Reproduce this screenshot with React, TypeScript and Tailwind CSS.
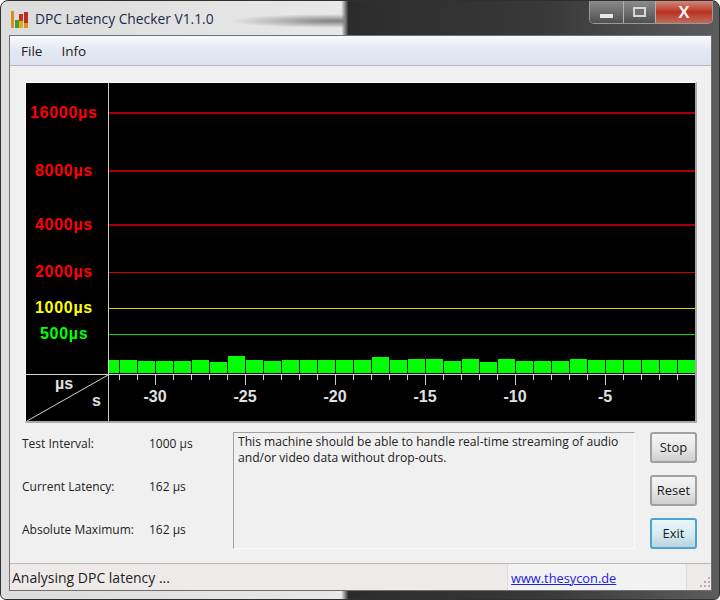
import React from 'react';

const barTops = [360, 360, 361, 361, 361, 360, 362, 356, 360, 361, 360, 360, 360, 360, 360, 357, 360, 359, 359, 361, 359, 362, 359, 361, 361, 361, 359, 360, 360, 360, 360, 360, 360];
const gridLines = [
  { y: 112, h: 2, color: '#a80000', label: '16000µs', labelX: 30, labelY: 118, labelColor: '#ff0000' },
  { y: 170, h: 2, color: '#a80000', label: '8000µs', labelX: 35, labelY: 176, labelColor: '#ff0000' },
  { y: 224, h: 2, color: '#a80000', label: '4000µs', labelX: 35, labelY: 230, labelColor: '#ff0000' },
  { y: 272, h: 1, color: '#d00000', label: '2000µs', labelX: 35, labelY: 277, labelColor: '#ff0000' },
  { y: 308, h: 1, color: '#d8d800', label: '1000µs', labelX: 35, labelY: 313, labelColor: '#ffff00' },
  { y: 334, h: 1, color: '#00d800', label: '500µs', labelX: 40, labelY: 339, labelColor: '#00ff00' },
];
const seconds = [-30, -25, -20, -15, -10, -5];

// the graph is drawn in window coordinates, offset by the black area's corner
const LatencyChart = () => (
  <svg width="669" height="338" viewBox="26 83 669 338" className="block font-['Liberation_Sans',sans-serif]">
    <rect x="26" y="83" width="669" height="338" fill="#000000" />
    {gridLines.map((line) => (
      <g key={line.y}>
        <rect x="109" y={line.y} width="586" height={line.h} fill={line.color} />
        <text x={line.labelX} y={line.labelY} fill={line.labelColor} fontSize="16" fontWeight="700" letterSpacing="0.7">
          {line.label}
        </text>
      </g>
    ))}
    {barTops.map((top, i) => {
      const x = i === 0 ? 109 : 102 + i * 18;
      const w = i === 0 ? 10 : 17;
      return <rect key={i} x={x} y={top} width={w} height={373 - top} fill="#00ff00" />;
    })}
    <rect x="108" y="83" width="1" height="338" fill="#d0d0d0" />
    <rect x="26" y="374" width="669" height="1" fill="#d0d0d0" />
    {barTops.slice(0, 32).map((_, i) => {
      const x = 119 + i * 18;
      const major = (x - 155) % 90 === 0;
      return <rect key={i} x={x} y="375" width="1" height={major ? 10 : 5} fill="#d0d0d0" />;
    })}
    {seconds.map((s, i) => (
      <text key={s} x={155 + i * 90} y="402" fill="#e0e0e0" fontSize="16" fontWeight="700" textAnchor="middle">
        {s}
      </text>
    ))}
    <line x1="108" y1="375" x2="27" y2="421" stroke="#d0d0d0" strokeWidth="1" />
    <text x="55" y="389" fill="#e0e0e0" fontSize="16" fontWeight="700">µs</text>
    <text x="92" y="406" fill="#e0e0e0" fontSize="16" fontWeight="700">s</text>
  </svg>
);

const AppIcon = () => (
  <svg width="17" height="17" viewBox="0 0 17 17" className="shrink-0">
    <rect x="0" y="0" width="3" height="17" fill="#e08a20" />
    <rect x="4" y="9" width="4" height="8" fill="#3f9f2a" />
    <rect x="8" y="3" width="4" height="14" fill="#c8301c" />
    <rect x="8" y="10" width="4" height="7" fill="#d8b020" />
    <rect x="13" y="1" width="4" height="16" fill="#b8301c" />
    <rect x="13" y="12" width="4" height="5" fill="#e0901c" />
  </svg>
);

const StatusGrip = () => (
  <svg width="11" height="11" viewBox="0 0 11 11" className="mt-auto mb-[2px] ml-auto">
    {[[8, 0], [4, 4], [8, 4], [0, 8], [4, 8], [8, 8]].map(([x, y]) => (
      <rect key={`${x}-${y}`} x={x} y={y} width="2" height="2" fill="#b4b0b0" />
    ))}
  </svg>
);

const ReadoutRow = ({ label, value }: { label: string; value: string }) => (
  <div className="flex h-[20px] items-center">
    <span className="w-[127px]">{label}</span>
    <span>{value}</span>
  </div>
);

const WinButton = ({ label, focused }: { label: string; focused?: boolean }) => (
  <button
    className={
      focused
        ? 'h-[31px] w-[47px] rounded-[3px] border-2 border-[#4aa3d0] bg-gradient-to-b from-[#eaf6fb] via-[#d8ebf3] to-[#b8d4e0] text-[13px] text-[#1a1a1a]'
        : 'h-[31px] w-[47px] rounded-[3px] border-2 border-[#a0a0a0] bg-gradient-to-b from-[#f4f4f4] via-[#e8e8e8] to-[#cfcfcf] text-[13px] text-[#1a1a1a]'
    }
  >
    {label}
  </button>
);

export default function App() {
  return (
    <div className="h-[600px] w-[720px] overflow-hidden bg-white font-['Open_Sans',sans-serif] text-[12px] text-[#222222]">
      <div className="flex h-[600px] flex-col rounded-t-[8px] rounded-b-[6px] border border-[#303030] bg-[linear-gradient(90deg,#dcdcdc_0%,#e8e8e8_47.4%,#2c2c2c_48.4%,#383838_75%,#5c5c5c_100%)] pr-[7px] pb-[8px] pl-[8px]">
        {/* Title bar */}
        <div className="flex h-[34px] shrink-0 items-start justify-between bg-[radial-gradient(ellipse_105px_7px_at_326px_20px,#808080,transparent)] bg-[length:336px_100%] bg-no-repeat">
          <div className="flex items-center gap-[7px] pt-[9px] pl-[2px]">
            <AppIcon />
            <span className="-mt-[1px] text-[13.8px] text-[#1c2a4a]">DPC Latency Checker V1.1.0</span>
          </div>
          <div className="-mr-[1px] flex h-[23px] w-[124px] overflow-hidden rounded-b-[5px] border border-t-0 border-[#9a9a9a]">
            <div className="flex w-[33px] items-end justify-center bg-gradient-to-b from-[#8c8c8c] to-[#505050] pb-[5px]">
              <div className="h-[4px] w-[13px] bg-[#e8e8e8]" />
            </div>
            <div className="flex w-[33px] items-center justify-center border-x border-[#b0b0b0] bg-gradient-to-b from-[#8c8c8c] to-[#505050]">
              <div className="h-[10px] w-[13px] border-2 border-[#d8d8d8] bg-[#707070]" />
            </div>
            <div className="flex flex-1 items-center justify-center bg-gradient-to-b from-[#d0887c] via-[#b8301e] to-[#c06a5a]">
              <span className="text-[17px] leading-none font-bold text-[#efefef] [font-family:'Liberation_Sans',sans-serif]">X</span>
            </div>
          </div>
        </div>

        {/* Client area */}
        <div className="flex min-h-0 flex-1 flex-col border border-[#707070] bg-[#f0f0f0]">
          <div className="flex h-[30px] shrink-0 items-center gap-[19px] border-b border-[#b4b8c4] bg-gradient-to-b from-[#f8f9fb] via-[#e4e8f2] to-[#dde2ef] pt-[1px] pl-[11px] text-[13.5px]">
            <span>File</span>
            <span>Info</span>
          </div>

          <div className="flex flex-1 flex-col pt-[16px] pl-[12px]">
            <div className="ml-[3px] w-[672px] border-t border-r-2 border-b-2 border-l border-t-[#fafafa] border-r-[#a8a8a8] border-b-[#a8a8a8] border-l-[#fafafa]">
              <LatencyChart />
            </div>

            <div className="mt-[9px] flex">
              <div className="flex h-[117px] w-[211px] flex-col gap-[23px] pt-[2px]">
                <ReadoutRow label="Test Interval:" value="1000 µs" />
                <ReadoutRow label="Current Latency:" value="162 µs" />
                <ReadoutRow label="Absolute Maximum:" value="162 µs" />
              </div>
              <div className="h-[117px] w-[402px] border-t border-r border-b border-l border-t-[#a0a0a0] border-r-[#fafafa] border-b-[#fafafa] border-l-[#a0a0a0] pt-[1px] pl-[4px] text-[12.1px] leading-[16px]">
                This machine should be able to handle real-time streaming of audio and/or video data without drop-outs.
              </div>
              <div className="ml-[15px] flex flex-col gap-[12px]">
                <WinButton label="Stop" />
                <WinButton label="Reset" />
                <WinButton label="Exit" focused />
              </div>
            </div>
          </div>

          {/* Status bar */}
          <div className="flex h-[27px] shrink-0 items-center border-t border-[#b8b8b8] bg-[#eeeaea] text-[14px]">
            <span className="w-[497px] pt-[1px] pl-[2px]">Analysing DPC latency ...</span>
            <div className="flex h-full w-[180px] items-center border-x border-[#dcdcdc] bg-[#f2f2f2] pt-[3px] pl-[3px] text-[12.8px]">
              <span className="text-[#2020e0] underline">www.thesycon.de</span>
            </div>
            <div className="flex h-full flex-1">
              <StatusGrip />
            </div>
          </div>
        </div>
      </div>
    </div>
  );
}
